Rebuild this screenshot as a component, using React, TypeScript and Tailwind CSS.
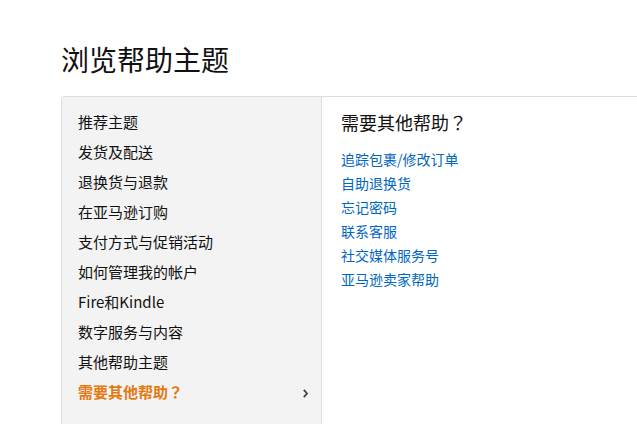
import React from "react";

const menu = [
  "推荐主题",
  "发货及配送",
  "退换货与退款",
  "在亚马逊订购",
  "支付方式与促销活动",
  "如何管理我的帐户",
  "Fire和Kindle",
  "数字服务与内容",
  "其他帮助主题",
];

const links = [
  "追踪包裹/修改订单",
  "自助退换货",
  "忘记密码",
  "联系客服",
  "社交媒体服务号",
  "亚马逊卖家帮助",
];

const Q = () => <span style={{ fontFamily: '"Noto Sans CJK TC", sans-serif' }}>？</span>;

export default function App() {
  return (
    <div
      className="w-[637px] h-[424px] overflow-hidden bg-white flex flex-col"
      style={{ fontFamily: '"Microsoft YaHei", "Noto Sans CJK SC", "Noto Sans", sans-serif' }}
    >
      <h1 className="pl-[61px] pt-[39px] text-[28px] leading-[40px] text-[#111] font-normal">
        浏览帮助主题
      </h1>
      <div className="ml-[61px] mt-[17px] flex flex-1 border-l border-t border-[#dddddd] rounded-tl-[4px] overflow-hidden">
        <div className="w-[260px] shrink-0 bg-[#f3f3f3] border-r border-[#dddddd] pt-[10px]">
          {menu.map((m) => (
            <div key={m} className="pl-[16px] text-[15px] leading-[30px] text-[#111]">
              {m}
            </div>
          ))}
          <div className="pl-[16px] pr-[13px] flex items-center justify-between text-[15px] leading-[30px] font-bold text-[#e47911]">
            <span>
              需要其他帮助<Q />
            </span>
            <svg width="5" height="9" viewBox="0 0 5 9" className="mt-[2px]">
              <path d="M0.8 0.8 L4 4.5 L0.8 8.2" fill="none" stroke="#444" strokeWidth="1.8" />
            </svg>
          </div>
        </div>
        <div className="flex-1 pl-[19px] pt-[12px]">
          <div className="text-[18px] leading-[26px] text-[#111]">
            需要其他帮助<Q />
          </div>
          <div className="mt-[12px] flex flex-col">
            {links.map((l) => (
              <a key={l} className="text-[14px] leading-[24px] text-[#0066c0] cursor-pointer">
                {l}
              </a>
            ))}
          </div>
        </div>
      </div>
    </div>
  );
}
